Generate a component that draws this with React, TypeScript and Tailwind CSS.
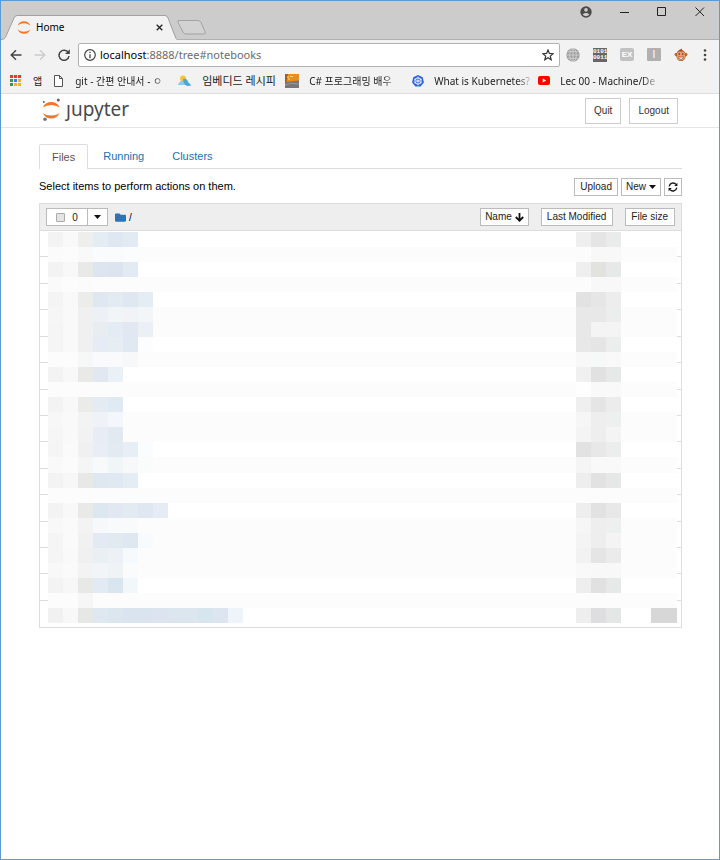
import { useState, ReactNode } from "react";
import { FaFolder } from "react-icons/fa";

interface MosaicRow {
  shaded?: boolean;
  left: string[];
  right: string[];
  size?: string;
}

interface Bookmark {
  label: string;
  icon: ReactNode;
  className: string;
}

const App = () => {
  return (
    <div className="flex min-h-screen flex-col border border-[#5b9bd5] bg-white font-['Liberation_Sans',sans-serif] text-black">
      <TitleBar />
      <Toolbar />
      <BookmarksBar />
      <Header />
      <main className="pl-[38px] pr-[37px] pt-4">
        <Tabs />
        <div className="flex items-center justify-between pt-[7px]">
          <p className="text-[11px] leading-5">Select items to perform actions on them.</p>
          <div className="flex gap-[3px] pt-[2px]">
            <SmallButton className="px-[5px]">Upload</SmallButton>
            <SmallButton className="px-1">
              New <Caret />
            </SmallButton>
            <SmallButton className="w-[18px] justify-center" label="Refresh">
              <RefreshIcon />
            </SmallButton>
          </div>
        </div>
        <FileList />
      </main>
    </div>
  );
};

const TitleBar = () => {
  return (
    <div className="flex h-[39px] items-end justify-between border-b border-[#b0b0b0] bg-[#ccc]">
      <div className="flex items-end">
        <div className="relative -mb-px flex h-[25px] w-[176px] items-center pl-4 pr-[14px] font-['Noto_Sans',sans-serif] text-[10px]">
          <svg className="absolute inset-0 h-full w-full" viewBox="0 0 176 25">
            <path d="M0 25C4 24 4 23 5 21L13 3Q14 .5 16 .5H164Q166 .5 167 3L174 21Q175 24 176 25Z" fill="#f2f2f2" />
            <path d="M0 24.5C4 24 4 23 5 21L13 3Q14 .5 16 .5H164Q166 .5 167 3L174 21Q175 24 176 24.5" fill="none" stroke="#a0a0a0" />
          </svg>
          <JupyterRings className="relative h-[13px] w-[14px]" />
          <span className="relative ml-[5px] grow">Home</span>
          <button aria-label="Close tab" className="relative">
            <svg className="size-[7px]" viewBox="0 0 7 7" stroke="#222" strokeWidth="1.3">
              <path d="M.7 .7l5.6 5.6M6.3 .7L.7 6.3" />
            </svg>
          </button>
        </div>
        <button aria-label="New tab" className="mb-1">
          <svg className="h-[15px] w-[29px]" viewBox="0 0 29 15">
            <path d="M1.500 .5H21Q23 .5 24 2.500L28 11.500Q29 14 27 14H9Q7 14 6 12L1 2.500Q.3 .5 2 .5Z" fill="#d2d2d2" stroke="#a2a2a2" />
          </svg>
        </button>
      </div>
      <div className="flex items-center gap-[28px] self-start pr-[14px] pt-[5px]">
        <button aria-label="Profile">
          <svg className="size-3" viewBox="0 0 12 12">
            <circle cx="6" cy="6" r="5.700" fill="#4a4a4a" />
            <circle cx="6" cy="3.900" r="1.800" fill="#ccc" />
            <path d="M2.500 8.400Q6 5.500 9.500 8.400Q6 12 2.500 8.400Z" fill="#ccc" />
          </svg>
        </button>
        <button aria-label="Minimize">
          <svg className="size-[9px]" viewBox="0 0 9 9" stroke="#222">
            <path d="M0 4.500h9" />
          </svg>
        </button>
        <button aria-label="Maximize">
          <svg className="size-[10px]" viewBox="0 0 10 10" fill="none" stroke="#222">
            <path d="M.5 .5h8v8h-8z" />
          </svg>
        </button>
        <button aria-label="Close">
          <svg className="size-[10px]" viewBox="0 0 10 10" stroke="#222">
            <path d="M.5 .5l8.500 8.500M9 .5l-8.500 8.500" />
          </svg>
        </button>
      </div>
    </div>
  );
};

const Toolbar = () => {
  return (
    <div className="flex h-[29px] items-center bg-[#f2f2f2] pl-[9px] pr-3 font-['Noto_Sans',sans-serif]">
      <div className="flex gap-3">
        <button aria-label="Back">
          <svg className="size-3" viewBox="0 0 12 12" fill="none" stroke="#444" strokeWidth="1.400">
            <path d="M11.500 6H1.500M6 1.200L1.200 6L6 10.800" />
          </svg>
        </button>
        <button aria-label="Forward">
          <svg className="size-3" viewBox="0 0 12 12" fill="none" stroke="#ccc" strokeWidth="1.400">
            <path d="M.5 6H10.500M6 1.200L10.800 6L6 10.800" />
          </svg>
        </button>
        <button aria-label="Reload">
          <svg className="size-3" viewBox="0 0 12 12">
            <path d="M10.300 3.700A5 5 0 1 0 11 7" fill="none" stroke="#444" strokeWidth="1.500" />
            <path d="M11.800 .3V5H7.100Z" fill="#444" />
          </svg>
        </button>
      </div>
      <div className="ml-2 flex h-6 grow items-center rounded-[2px] border border-[#b3b3b3] bg-white px-[5px]">
        <svg className="size-3 shrink-0" viewBox="0 0 12 12" fill="none" stroke="#444">
          <circle cx="6" cy="6" r="5.300" strokeWidth="1.200" />
          <path d="M6 5.200v4M6 2.700v1.300" strokeWidth="1.300" />
        </svg>
        <a href="#notebooks" className="ml-1 grow text-[11px] leading-4 text-[#6b6b6b]">
          <span className="text-black">localhost</span>:8888/tree#notebooks
        </a>
        <button aria-label="Bookmark this page">
          <svg className="size-3" viewBox="0 0 12 12" fill="none" stroke="#333" strokeWidth="1.200">
            <path d="M6 1L7.400 4.400L11.200 4.700L8.300 7.100L9.200 10.800L6 8.800L2.800 10.800L3.700 7.100L.8 4.700L4.600 4.400Z" />
          </svg>
        </button>
      </div>
      <div className="ml-[6px] flex items-center gap-[13px]">
        <svg className="size-[14px]" viewBox="0 0 14 14" fill="none">
          <circle cx="7" cy="7" r="6.700" fill="#9f9f9f" />
          <path d="M.5 7h13M7 .5v13M1.500 3.700h11M1.500 10.300h11" stroke="#ddd" strokeWidth=".7" />
          <ellipse cx="7" cy="7" rx="3.300" ry="6.500" stroke="#ddd" strokeWidth=".7" />
        </svg>
        <span className="flex h-[14px] w-[14px] flex-col justify-center bg-[#666] text-center font-['Liberation_Mono',monospace] text-[6px] font-bold leading-[6px] text-white">
          <span>0101</span>
          <span>0011</span>
        </span>
        <span className="flex h-[13px] w-[14px] items-center justify-center rounded-[2px] bg-[#c2c2c2] font-['Liberation_Sans',sans-serif] text-[8px] font-bold text-white">
          EX
        </span>
        <span className="flex h-[13px] w-[14px] items-center justify-center rounded-[1px] bg-[#b0b0b0] font-['Liberation_Sans',sans-serif] text-[10px] text-white">
          I
        </span>
        <MonkeyIcon />
        <button aria-label="Menu" className="pl-[2px]">
          <svg className="h-3 w-1" viewBox="0 0 4 12" fill="#444">
            <circle cx="2" cy="1.500" r="1.300" />
            <circle cx="2" cy="6" r="1.300" />
            <circle cx="2" cy="10.500" r="1.300" />
          </svg>
        </button>
      </div>
    </div>
  );
};

const BookmarksBar = () => {
  return (
    <nav className="flex h-[25px] items-center overflow-hidden border-b border-[#ddd] bg-[#f2f2f2] pb-px pl-[9px] font-['Noto_Sans','Noto_Sans_CJK_KR',sans-serif] text-[10px] leading-4 text-[#222]">
      {bookmarks.map((b) => (
        <a key={b.label} href="#bookmark" className="flex shrink-0 items-center">
          {b.icon}
          <span className={b.className}>{b.label}</span>
        </a>
      ))}
    </nav>
  );
};

const Header = () => {
  return (
    <header className="flex h-[34px] items-center justify-between border-b border-[#e5e5e5] px-[41px]">
      <a href="#tree" className="flex items-center pb-1 font-['Noto_Sans',sans-serif] text-[19px] leading-6 text-[#4a4a4a]">
        <svg className="mr-1 h-6 w-5" viewBox="0 0 20 24">
          <path d="M.8 10.500Q3 5 9.200 5T17.600 10.500Q14 8 9.200 8T.8 10.500Z" fill="#f37726" />
          <path d="M.8 16Q4 18.500 9.200 18.500T17.600 16Q15 21.500 9.200 21.500T.8 16Z" fill="#f37726" />
          <circle cx="16.300" cy="3" r="1.500" fill="#616262" />
          <circle cx="1.800" cy="5" r="1" fill="#616262" />
          <circle cx="3" cy="22.200" r="1.800" fill="#767677" />
        </svg>
        ȷupyter
      </a>
      <div className="flex gap-2">
        <button className="h-[26px] border border-[#ccc] px-2 text-[10px] text-[#333]">Quit</button>
        <button className="h-[26px] border border-[#ccc] px-2 text-[10px] text-[#333]">Logout</button>
      </div>
    </header>
  );
};

const Tabs = () => {
  const [selected, setSelected] = useState("Files");

  return (
    <div role="tablist" className="flex h-[25px] border-b border-[#ddd] text-[11px]">
      {["Files", "Running", "Clusters"].map((tab) => (
        <button
          key={tab}
          role="tab"
          aria-selected={selected === tab}
          onClick={() => setSelected(tab)}
          className={
            selected === tab
              ? "mr-[2px] h-[25px] rounded-t-[2px] border border-b-0 border-[#ddd] bg-white px-3 text-[#555]"
              : "mr-[2px] h-[25px] px-[13px] text-[#296eaa]"
          }
        >
          {tab}
        </button>
      ))}
    </div>
  );
};

const SmallButton = ({ children, className, label }: { children: ReactNode; className: string; label?: string }) => {
  return (
    <button
      aria-label={label}
      className={`flex h-[18px] items-center gap-[3px] border border-[#bbb] bg-white text-[10px] leading-4 text-[#222] ${className}`}
    >
      {children}
    </button>
  );
};

const FileList = () => {
  return (
    <section className="mt-[7px] border border-[#ddd]">
      <div className="flex h-[27px] items-center border-b border-[#ddd] bg-[#eee] px-[6px] text-[10px]">
        <div className="flex h-[18px] border border-[#bbb] bg-white text-[#222]">
          <label className="flex w-10 items-center justify-center gap-[7px]">
            <input type="checkbox" className="size-[9px] appearance-none rounded-[1px] border border-[#aaa] bg-[#e4e4e4]" />0
          </label>
          <button aria-label="Select by type" className="flex w-5 items-center justify-center border-l border-[#bbb]">
            <Caret />
          </button>
        </div>
        <a href="#tree" className="ml-[7px] flex items-center gap-[3px]">
          <FaFolder className="size-[11px] text-[#2b74b5]" />/
        </a>
        <div className="ml-auto flex gap-3">
          <SmallButton className="px-1">
            Name <ArrowDownIcon />
          </SmallButton>
          <SmallButton className="pl-[5px] pr-[6px]">Last Modified</SmallButton>
          <SmallButton className="pl-[5px] pr-[6px]">File size</SmallButton>
        </div>
      </div>
      <div className="flex h-[396px]">
        <Gutter className="w-2" />
        <div className="flex grow flex-col pb-1 pt-px">
          {rows.map((row, i) => (
            <div key={i} className={row.shaded ? "flex flex-1 bg-[#fcfcfc]" : "flex flex-1"}>
              {row.left.map((c, n) => (
                <span key={n} className="w-[15px]" style={{ backgroundColor: `#${c}` }} />
              ))}
              <span className="grow" />
              {row.right.map((c, n) => (
                <span key={n} className="w-[15px]" style={{ backgroundColor: `#${c}` }} />
              ))}
              <span className="ml-[30px] w-[26px]" style={{ backgroundColor: row.size }} />
            </div>
          ))}
        </div>
        <Gutter className="w-1" />
      </div>
    </section>
  );
};

const Gutter = ({ className }: { className: string }) => {
  return (
    <div className={`flex flex-col pb-[26px] ${className}`}>
      {Array.from(Array(14).keys()).map((n) => (
        <span key={n} className="flex-1 border-b border-[#ddd]" />
      ))}
    </div>
  );
};

const Caret = () => {
  return (
    <svg className="h-1 w-[7px]" viewBox="0 0 7 4" fill="#111">
      <path d="M0 0H7L3.500 4Z" />
    </svg>
  );
};

const JupyterRings = ({ className }: { className: string }) => {
  return (
    <svg className={className} viewBox="0 0 14 13" fill="#f37726">
      <path d="M.7 4.500Q2.500 .3 7 .3T13.300 4.500Q10.500 2.300 7 2.300T.7 4.500Z" />
      <path d="M.7 8.500Q3.500 10.700 7 10.700T13.300 8.500Q11.500 12.700 7 12.700T.7 8.500Z" />
    </svg>
  );
};

const RefreshIcon = () => {
  return (
    <svg className="size-[10px]" viewBox="0 0 10 10">
      <path d="M1.200 4.300A3.900 3.900 0 0 1 8 2.400M8.800 5.700A3.900 3.900 0 0 1 2 7.600" fill="none" stroke="#111" strokeWidth="1.300" />
      <path d="M9.400 .8V4H6.200ZM.6 9.200V6H3.800Z" fill="#111" />
    </svg>
  );
};

const ArrowDownIcon = () => {
  return (
    <svg className="size-[9px]" viewBox="0 0 9 9" fill="none" stroke="#111" strokeWidth="1.800">
      <path d="M4.500 0V8M.8 4L4.500 7.700L8.200 4" />
    </svg>
  );
};

const MonkeyIcon = () => {
  return (
    <svg className="size-[14px]" viewBox="0 0 14 14">
      <circle cx="2.200" cy="6.500" r="1.700" fill="#c9683c" />
      <circle cx="11.800" cy="6.500" r="1.700" fill="#c9683c" />
      <path d="M6 1.500L8 .5V2Q11.500 3 11.800 7.500C11.500 11 10 13 7 13S2.500 11 2.200 7.500Q2.500 3 6 1.500Z" fill="#a9502b" />
      <path d="M7 3.800C9 2.800 11.400 4 11 6.500C11.800 10 10 12.400 7 12.400S2.200 10 3 6.500C2.600 4 5 2.800 7 3.800Z" fill="#ee9a66" />
      <circle cx="5.200" cy="6" r=".8" fill="#333" />
      <circle cx="8.800" cy="6" r=".8" fill="#333" />
      <path d="M4.300 8.700Q7 9.700 9.700 8.700Q9 11.300 7 11.300T4.300 8.700Z" fill="#fff" stroke="#6d3420" strokeWidth=".5" />
    </svg>
  );
};

const AppsIcon = () => {
  const colors = ["#e33b2e", "#e33b2e", "#e33b2e", "#2d9b4e", "#3b7ded", "#f0b419", "#2d9b4e", "#f0b419", "#f0b419"];

  return (
    <svg className="size-[11px]" viewBox="0 0 11 11">
      {colors.map((c, i) => (
        <rect key={i} x={(i % 3) * 4} y={Math.floor(i / 3) * 4} width="3" height="3" fill={c} />
      ))}
    </svg>
  );
};

const fade = "whitespace-nowrap [mask-image:linear-gradient(to_right,black_82%,transparent)]";

const bookmarks: Bookmark[] = [
  { label: "앱", icon: <AppsIcon />, className: "mx-3" },
  {
    label: "git - 간편 안내서 - ㅇ",
    icon: (
      <svg className="h-3 w-[9px]" viewBox="0 0 9 12" fill="#fff" stroke="#555">
        <path d="M.5 .5H5.500L8.500 3.500V11.500H.5ZM5.500 .5V3.500H8.500" />
      </svg>
    ),
    className: `ml-3 mr-2 w-[95px] ${fade}`,
  },
  {
    label: "임베디드 레시피",
    icon: (
      <svg className="h-3 w-[14px]" viewBox="0 0 14 12">
        <circle cx="5" cy="3.500" r="3" fill="#f7c443" />
        <path d="M0 10Q1 6 5 5.500Q9 5 12 10Z" fill="#8ccbe8" />
        <path d="M5 4Q9 3 10 7L13.500 10.500L9 11Q5 9 5 4Z" fill="#4da6d8" />
      </svg>
    ),
    className: "mx-[10px] w-[73px] whitespace-nowrap text-[11px]",
  },
  {
    label: "C# 프로그래밍 배우",
    icon: (
      <svg className="size-[14px]" viewBox="0 0 14 14">
        <path d="M0 0H14V8H0Z" fill="#ed8b1c" />
        <path d="M0 0H3L1.500 8H0Z" fill="#a85f1c" />
        <path d="M0 8L14 6.500V14H0Z" fill="#777" />
        <path d="M2 3h2M5 2.500h3M3 5h2" stroke="#fbd38a" />
        <path d="M0 11Q6 8 14 10" stroke="#9a9a9a" fill="none" />
      </svg>
    ),
    className: `ml-[10px] mr-[13px] w-[90px] ${fade}`,
  },
  {
    label: "What is Kubernetes?",
    icon: (
      <svg className="size-3" viewBox="0 0 12 12" fill="none">
        <path d="M6 0L10.700 2.300L11.900 7.400L8.600 11.500H3.400L.1 7.400L1.300 2.300Z" fill="#2a62d9" />
        <circle cx="6" cy="6" r="3.200" stroke="#fff" strokeWidth=".9" />
        <path d="M6 1.500V10.500M2 4L10 8M10 4L2 8" stroke="#fff" strokeWidth=".7" />
      </svg>
    ),
    className: `ml-[10px] mr-[4px] w-[100px] ${fade}`,
  },
  {
    label: "Lec 00 - Machine/De",
    icon: (
      <svg className="h-[9px] w-3" viewBox="0 0 12 9">
        <rect width="12" height="9" rx="2" fill="#f00" />
        <path d="M4.700 2.500L8.200 4.500L4.700 6.500Z" fill="#fff" />
      </svg>
    ),
    className: `ml-[10px] w-[100px] ${fade}`,
  },
];

const rows: MosaicRow[] = [
  { left: ["f3f3f3", "f9f9f9", "eeeeed", "e5edf4", "dfe7f2", "e2eaf3"], right: ["efefef", "e5e5e5", "eaecec"] },
  { shaded: true, left: ["fbfbfb", "fcfcfc", "f9f9f9", "fafbfc", "fafbfc", "fafcfd"], right: ["fcfcfc", "f8f8f8", "f8f8f8"] },
  { left: ["f3f3f3", "f8f8f8", "e9e9e8", "dde5f0", "dce5ef", "e2eaf3"], right: ["efefef", "e2e2df", "e6e9e8"] },
  { shaded: true, left: ["fafafa", "fcfcfc", "fbfbfb"], right: ["fcfcfc", "f8f8f8", "f8f8f8"] },
  { left: ["f4f4f4", "f9f9f9", "ececeb", "dfe8f1", "e2eaf2", "dfe8f0", "e4ecf4"], right: ["e2e2e2", "e6e6e6", "ededed"] },
  { shaded: true, left: ["f6f6f6", "f9f9f9", "f0f0f0", "edf1f5", "f1f5f8", "f2f3f6", "f2f6f8"], right: ["e8e8e8", "e8e8e8", "ebeeed"] },
  { shaded: true, left: ["f5f5f5", "f9f9f9", "f0f0f0", "e8edf2", "e5ebf4", "e1e8f1", "eaf0f5"], right: ["e8e8e8", "f4f4f4", "f4f4f4"] },
  { left: ["f5f5f5", "f9f9f9", "f0f0f0", "e5ecf5", "e6edf3", "e0e8f1", "fbfdff"], right: ["e8e8e8", "e5e5e5", "ebeeed"] },
  { shaded: true, left: ["fbfcfb", "fcfcfc", "f5f8f6", "f8fafc", "f8fafc", "f6f8fa"], right: ["f8f8f8", "f5f9f8", "f8f9f8"] },
  { left: ["f3f3f3", "f8f8f8", "e9e9e8", "e1e8f2", "eaf1f6"], right: ["f0f0f0", "e1e1e1", "e6e9e8"] },
  { shaded: true, left: ["fcfcfc", "fcfcfc", "fcfcfc"], right: ["fefefe", "f9f9f9", "f9f9f9"] },
  { left: ["f3f3f3", "f8f8f8", "ebebea", "e4ebf3", "e0eaf3"], right: ["efefef", "e5e5e5", "ececec"] },
  { shaded: true, left: ["f7f7f7", "f9f9f9", "f3f3f3", "eff3f7", "f3f6fa"], right: ["f6f6f6", "eeeeee", "edf0ef"] },
  { shaded: true, left: ["f6f6f6", "f9f9f9", "f2f2f2", "e7ecf5", "e2e9f1"], right: ["f4f4f4", "eeeeee", "f4f4f4"] },
  { left: ["f5f5f5", "fafafa", "f0f0f0", "e8edf6", "e3eaf1", "e7eef6", "fafdfe"], right: ["e2e2e2", "e8e8e8", "ebeeed"] },
  { shaded: true, left: ["f9f9f9", "fbfbfb", "f5f5f5", "f7f9fa", "f0f5f8", "f6f8fa", "fafcfb"], right: ["f5f5f5", "f9f9f9", "f9f9f9"] },
  { left: ["f3f3f3", "f7f7f7", "e8e8e7", "dfe7f0", "e0e8f1", "e4ecf4"], right: ["eeeeee", "e2e2e2", "e5e8e7"] },
  { shaded: true, left: [], right: [] },
  { left: ["f3f3f3", "f8f8f8", "e9e9e8", "dde7f0", "e1e8f2", "e2eaf2", "dfe7f1", "e5ecf5"], right: ["eeeeee", "e2e2e2", "e8e8e8"] },
  { shaded: true, left: ["f8f8f8", "fafafa", "f3f3f3", "f6f8fa", "f8fafb", "f8fafb"], right: ["f6f6f6", "eeeeee", "edf0ef"] },
  { shaded: true, left: ["f5f5f5", "fafafa", "f1f1f1", "e3eaf3", "e2eaf1", "dfe7f0", "f8fbfd"], right: ["f4f4f4", "eeeeee", "f4f4f4"] },
  { shaded: true, left: ["f5f5f5", "f9f9f9", "f0f0f0", "eaeff4", "edf0f5", "f7fafd"], right: ["f2f2f2", "e5e5e5", "ebebeb"] },
  { shaded: true, left: ["f8f8f8", "fafafa", "f3f3f3", "f1f5f8", "eff3f6", "fafbfc"], right: ["f9f9f9", "f8f8f8", "f8f8f8"] },
  { left: ["f3f3f3", "f7f7f7", "e8e8e7", "e2eaf3", "dae6ef", "f2f7fa"], right: ["eeeeee", "e1e1e1", "e6e9e8"] },
  { shaded: true, left: ["fcfcfc", "fcfcfc", "f6f6f6"], right: [] },
  {
    left: ["f1f1f1", "f8f8f8", "e7e7e6", "dfe8f1", "dbe6ee", "d9e4ee", "d9e4ee", "dce5ef", "dbe6ef", "dce6ef", "d7e5ee", "dce5f0", "eef4f9"],
    right: ["eeeeee", "dedee0", "e4e7e6"],
    size: "#d7d7d7",
  },
];

export default App;
